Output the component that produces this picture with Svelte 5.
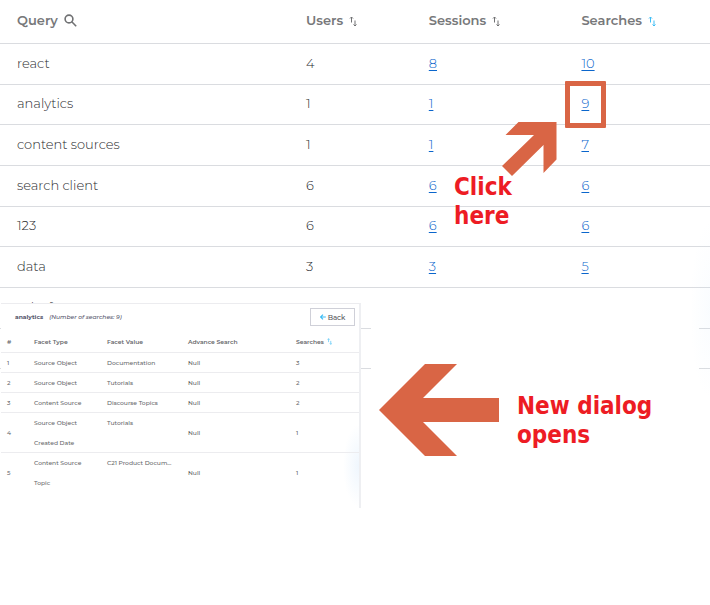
<script lang="ts">
	const columns = [
		{ key: 'users', label: 'Users', active: false },
		{ key: 'sessions', label: 'Sessions', active: false },
		{ key: 'searches', label: 'Searches', active: true }
	];

	const queries = [
		{ query: 'react', users: 4, sessions: 8, searches: 10 },
		{ query: 'analytics', users: 1, sessions: 1, searches: 9 },
		{ query: 'content sources', users: 1, sessions: 1, searches: 7 },
		{ query: 'search client', users: 6, sessions: 6, searches: 6 },
		{ query: '123', users: 6, sessions: 6, searches: 6 },
		{ query: 'data', users: 3, sessions: 3, searches: 5 },
		{ query: 'salesforce', users: 3, sessions: null, searches: null },
		{ query: '', users: null, sessions: null, searches: null }
	];

	const facets = [
		{ type: ['Source Object'], value: 'Documentation', advance: 'Null', searches: 3 },
		{ type: ['Source Object'], value: 'Tutorials', advance: 'Null', searches: 2 },
		{ type: ['Content Source'], value: 'Discourse Topics', advance: 'Null', searches: 2 },
		{ type: ['Source Object', 'Created Date'], value: 'Tutorials', advance: 'Null', searches: 1 },
		{ type: ['Content Source', 'Topic'], value: 'C21 Product Docum...', advance: 'Null', searches: 1 }
	];
</script>

{#snippet sortIcon()}
	<svg class="sort-icon" viewBox="0 0 8 11" aria-hidden="true">
		<path d="M2.500 6.500V1M1 2.500L2.500 1L4 2.500M6 4.500V10M4.500 8.500L6 10L7.500 8.500" />
	</svg>
{/snippet}

<main class="report">
	<table class="queries">
		<thead>
			<tr>
				<th class="col-query">
					<span class="heading">
						Query
						<button class="icon-button" aria-label="Search queries">
							<svg class="search-icon" viewBox="0 0 13 13" aria-hidden="true">
								<circle cx="5" cy="5" r="3.9" />
								<path d="M7.8 7.8l4.4 4.4" />
							</svg>
						</button>
					</span>
				</th>
				{#each columns as column}
					<th class="col-{column.key}">
						<span class="heading">
							{column.label}
							<button class="icon-button" class:active={column.active} aria-label="Sort by {column.label}">
								{@render sortIcon()}
							</button>
						</span>
					</th>
				{/each}
			</tr>
		</thead>
		<tbody>
			{#each queries as row}
				<tr>
					<td>{row.query}</td>
					<td>{row.users ?? ''}</td>
					<td>{#if row.sessions}<a href="#sessions">{row.sessions}</a>{/if}</td>
					<td>{#if row.searches}<a href="#searches">{row.searches}</a>{/if}</td>
				</tr>
			{/each}
		</tbody>
	</table>

	<div class="cover"></div>
	<div class="glow"></div>

	<section class="dialog" role="dialog" aria-labelledby="dialog-title">
		<header class="dialog-header">
			<h2 id="dialog-title">analytics</h2>
			<em>(Number of searches: 9)</em>
			<button class="back">
				<svg class="back-icon" viewBox="0 0 7 7" aria-hidden="true">
					<path d="M6.8 3.5H.8M3.5 .7L.7 3.5l2.8 2.8" />
				</svg>
				Back
			</button>
		</header>
		<table class="facets">
			<thead>
				<tr>
					<th class="facet-index">#</th>
					<th class="facet-type">Facet Type</th>
					<th class="facet-value">Facet Value</th>
					<th class="facet-advance">Advance Search</th>
					<th>
						<span class="heading">
							Searches
							<button class="icon-button active" aria-label="Sort facets by searches">
								{@render sortIcon()}
							</button>
						</span>
					</th>
				</tr>
			</thead>
			<tbody>
				{#each facets as facet, i}
					<tr>
						<td>{i + 1}</td>
						<td>
							{#each facet.type as line}
								<div>{line}</div>
							{/each}
						</td>
						<td class="top">{facet.value}</td>
						<td>{facet.advance}</td>
						<td>{facet.searches}</td>
					</tr>
				{/each}
			</tbody>
		</table>
	</section>

	<!-- walkthrough notes on top of the report -->
	<div class="marker"></div>
	<svg class="arrow arrow-click" viewBox="0 0 56 56" aria-hidden="true">
		<path d="M17.5 1H55.5V38.500L42.500 52V24L11 55L1 45L33 14H4.500Z" />
	</svg>
	<p class="note note-click">Click<br />here</p>
	<svg class="arrow arrow-dialog" viewBox="0 0 120 92" aria-hidden="true">
		<path d="M0 46L46 0H78L44 34H120V58H44L78 92H46Z" />
	</svg>
	<p class="note note-dialog">New dialog<br />opens</p>
</main>

<style>
	:global(body) {
		margin: 0;
		background: #fff;
	}

	.report {
		position: relative;
		min-height: 100vh;
		overflow: hidden;
		font-family: Montserrat, 'Open Sans', sans-serif;
		color: #2b2c2f;
	}

	table {
		width: 100%;
		border-collapse: collapse;
		table-layout: fixed;
	}

	th,
	td {
		box-sizing: border-box;
		padding: 0;
		text-align: left;
	}

	.heading {
		display: flex;
		align-items: center;
		gap: 6px;
	}

	.icon-button {
		display: flex;
		padding: 0;
		border: 0;
		background: none;
		color: #707173;
		cursor: pointer;
	}

	.icon-button.active {
		color: #3dbdf5;
	}

	svg {
		fill: none;
		stroke: currentColor;
	}

	.search-icon {
		width: 13px;
		height: 13px;
		stroke-width: 1.6;
	}

	.sort-icon {
		width: 8px;
		height: 11px;
		margin-top: 2px;
		stroke-width: 1;
	}

	.queries th,
	.queries td {
		height: 41px;
		padding: 0 0 2px 17px;
		border-bottom: 1px solid #dadce0;
		font-size: 13px;
		line-height: 20px;
	}

	.queries td {
		font-weight: 300;
	}

	.queries tr:nth-child(3n + 2) td {
		height: 40px;
	}

	.queries th {
		height: 43px;
		font-weight: 600;
		color: #77787a;
	}

	.col-query {
		width: 40.7%;
	}

	.col-users {
		width: 17.3%;
	}

	.col-sessions {
		width: 21.5%;
	}

	a {
		color: #0b66cc;
		text-underline-offset: 2px;
	}

	.glow {
		position: absolute;
		top: 220px;
		right: 0;
		width: 20px;
		height: 180px;
		background: radial-gradient(ellipse at right, rgba(200, 228, 250, 0.1), transparent 70%);
	}

	.cover {
		position: absolute;
		top: 288px;
		left: 371px;
		right: 11px;
		bottom: 0;
		background: #fff;
	}

	.dialog {
		position: absolute;
		top: 303px;
		left: 1px;
		box-sizing: border-box;
		width: 360px;
		height: 205px;
		border-top: 1px solid #ececef;
		border-right: 2px solid #eeeff2;
		background: radial-gradient(ellipse at right, #eff6fd, #fff 70%) right bottom / 16px 84px no-repeat #fff;
		color: #66676a;
		font-size: 6px;
		font-weight: 500;
	}

	.dialog-header {
		display: flex;
		align-items: center;
		gap: 6px;
		height: 26px;
		padding: 0 4px 0 14px;
		color: #55556b;
	}

	.dialog-header h2 {
		margin: 0;
		font-size: 6px;
		font-weight: 700;
	}

	.back {
		display: flex;
		align-items: center;
		justify-content: center;
		gap: 2px;
		width: 45px;
		height: 18px;
		margin-left: auto;
		padding: 0;
		border: 1px solid #cfd0d8;
		background: #fff;
		color: #55565a;
		font: inherit;
		font-size: 7px;
		cursor: pointer;
	}

	.back-icon {
		width: 6px;
		height: 6px;
		stroke: #3dbdf5;
		stroke-width: 1.4;
	}

	.facets th,
	.facets td {
		padding-left: 6px;
		line-height: 20px;
		box-shadow: inset 0 -1px #ececef;
	}

	.facets th {
		height: 23px;
		font-weight: 600;
		color: #66676b;
	}

	.facets tr:last-child td {
		box-shadow: none;
	}

	.facets .top {
		vertical-align: top;
	}

	.facets .sort-icon {
		width: 5px;
		height: 7px;
		margin: 0;
	}

	.facets .heading {
		gap: 3px;
	}

	.facet-index {
		width: 27px;
	}

	.facet-type {
		width: 73px;
	}

	.facet-value {
		width: 81px;
	}

	.facet-advance {
		width: 108px;
	}

	.marker {
		position: absolute;
		top: 81px;
		left: 565px;
		box-sizing: border-box;
		width: 41px;
		height: 47px;
		border: 5px solid #d96545;
		border-radius: 1px;
	}

	.arrow {
		position: absolute;
		fill: #d96545;
		stroke: none;
	}

	.arrow-click {
		top: 121px;
		left: 501px;
		width: 56px;
		height: 56px;
	}

	.arrow-dialog {
		top: 364px;
		left: 379px;
		width: 120px;
		height: 92px;
	}

	.note {
		position: absolute;
		margin: 0;
		color: #ed1c24;
		font-family: 'DejaVu Sans Condensed', Tahoma, sans-serif;
		font-size: 24px;
		font-weight: 700;
		line-height: 29px;
	}

	.note-click {
		top: 173px;
		left: 454px;
	}

	.note-dialog {
		top: 392px;
		left: 517px;
	}
</style>
